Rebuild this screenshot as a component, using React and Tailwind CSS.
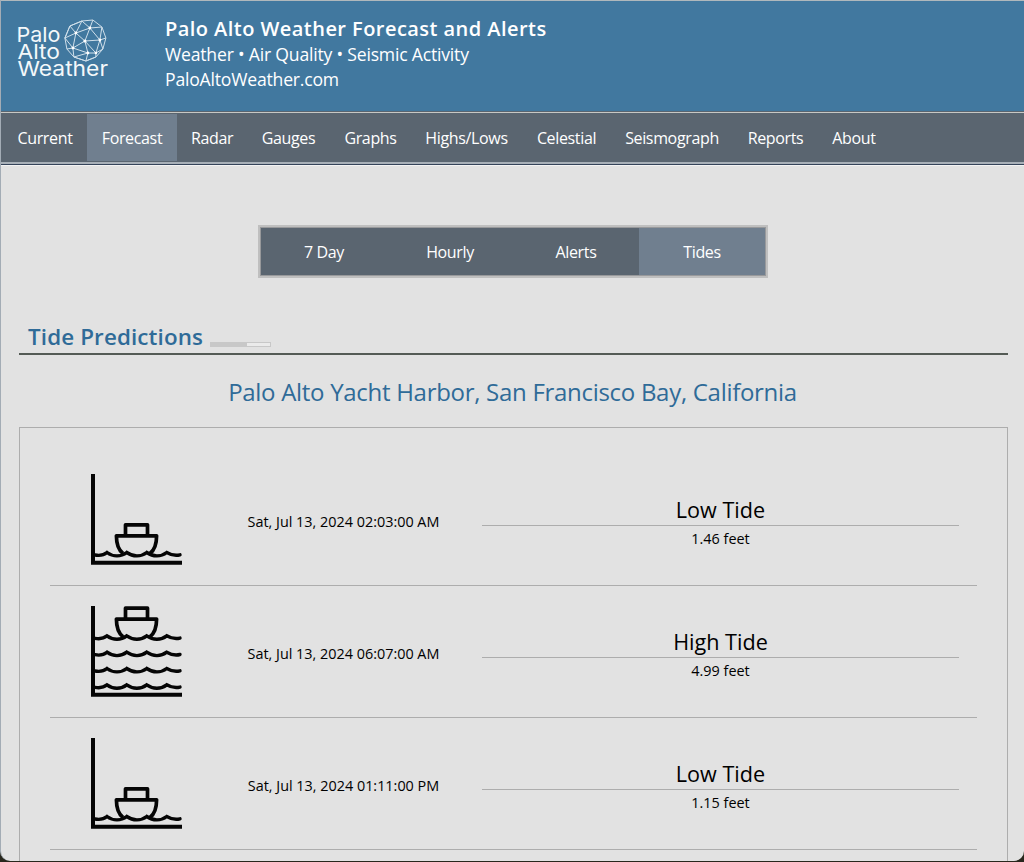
import React from 'react';

const NAV = [
  { label: 'Current', w: 'w-[84px]' },
  { label: 'Forecast', w: 'w-[90px]', active: true },
  { label: 'Radar', w: 'w-[70px]' },
  { label: 'Gauges', w: 'w-[83px]' },
  { label: 'Graphs', w: 'w-[81px]' },
  { label: 'Highs/Lows', w: 'w-[111px]' },
  { label: 'Celestial', w: 'w-[89px]' },
  { label: 'Seismograph', w: 'w-[122px]' },
  { label: 'Reports', w: 'w-[85px]' },
  { label: 'About', w: 'w-[72px]' },
];

const TABS = ['7 Day', 'Hourly', 'Alerts', 'Tides'];

const TIDES = [
  { date: 'Sat, Jul 13, 2024 02:03:00 AM', type: 'Low', feet: '1.46' },
  { date: 'Sat, Jul 13, 2024 06:07:00 AM', type: 'High', feet: '4.99' },
  { date: 'Sat, Jul 13, 2024 01:11:00 PM', type: 'Low', feet: '1.15' },
];

function Logo() {
  return (
    <svg width="96" height="66" viewBox="0 0 96 66" fill="none" className="shrink-0">
      <g fill="#f4f8fa" fontFamily="Inter, 'Open Sans', sans-serif" fontSize="20.500" fontWeight="400">
        <text x="2.500" y="27.200" textLength="44" lengthAdjust="spacingAndGlyphs">Palo</text>
        <text x="3.500" y="43.800" textLength="42.500" lengthAdjust="spacingAndGlyphs">Alto</text>
        <text x="3.500" y="60.800" textLength="90.500" lengthAdjust="spacingAndGlyphs">Weather</text>
      </g>
      <g transform="translate(0.900 1)">
        <g stroke="#cfdfea" strokeWidth="1" strokeLinejoin="round">
          <path d="M67 5 78 4 87 11 91 22 88 33 81 41 71 45 59 41 52 33 50 22 55 10Z" />
          <path d="M67 5 55 10 61 17 67 5 75 12 78 4M75 12 87 11 85 24 75 12 61 17 50 22 58 32 61 17 70 25 75 12M70 25 85 24 91 22M85 24 88 33 81 37 85 24M70 25 81 37 73 37 70 25 58 32 73 37 71 45 59 41 73 37M58 32 52 33M58 32 59 41M81 37 81 41 71 45M55 10 50 22" />
        </g>
        <g fill="#fff">
          <circle cx="61" cy="17" r="1.400" /><circle cx="75" cy="12" r="1.400" /><circle cx="70" cy="25" r="1.600" />
          <circle cx="85" cy="24" r="1.400" /><circle cx="58" cy="32" r="1.400" /><circle cx="73" cy="37" r="1.400" /><circle cx="81" cy="37" r="1.300" />
        </g>
      </g>
    </svg>
  );
}

const wave = (y) =>
  `M4 ${y}C9 ${y + 1} 13 ${y} 16 ${y - 2.5}C22 ${y + 2} 30 ${y + 2} 35.700 ${y - 2.5}C42 ${y + 2} 50 ${y + 2} 55.700 ${y - 2.5}C62 ${y + 2} 70 ${y + 2} 75.700 ${y - 2.5}C80 ${y} 84 ${y + 1} 89 ${y - 0.2}`;

function TideIcon({ high }) {
  return (
    <svg width="91" height="91" viewBox="0 0 91 91" fill="none" stroke="#050505" strokeWidth="3.700" className="overflow-visible">
      <path d="M2 0V88.800H91" strokeWidth="4" />
      <g transform={high ? 'translate(0 -48.700)' : undefined}>
        <path d="M34.500 61V50.800H56.500V61" strokeLinejoin="round" />
        <path d="M32 79.500C27.500 76 25.400 70 25.400 61.800H65.600C65.600 70 63.500 76 59 79.500" strokeLinejoin="round" />
      </g>
      {(high ? [32.3, 48.7, 65, 81.3] : [81]).map((y) => (
        <path key={y} d={wave(y)} strokeWidth="3.400" strokeLinecap="round" />
      ))}
    </svg>
  );
}

export default function App() {
  return (
    <div className="h-[862px] w-[1024px] overflow-hidden bg-[#28271d] font-['Open_Sans',sans-serif]">
      <div className="flex h-[861px] flex-col overflow-hidden rounded-b-[10px] border-l border-[#a3acb5] bg-[#e2e2e2]">
        <header className="flex h-[111px] shrink-0 border-t border-[#b0b8bc] bg-[#41789f] pl-[13px] pt-[14px] text-white">
          <Logo />
          <div className="ml-[55px] text-[17.6px] leading-[25px] tracking-[-0.2px]">
            <h1 className="pt-px text-[20px] font-semibold leading-[26px] tracking-[0.45px]">Palo Alto Weather Forecast and Alerts</h1>
            <p>Weather • Air Quality • Seismic Activity</p>
            <p>PaloAltoWeather.com</p>
          </div>
        </header>

        <nav className="flex h-[55px] shrink-0 flex-col border-t border-[#5a6570]">
          <div className="flex h-[51px] border-y border-t-[#c8c8c4] border-b-[#a8b0b8] bg-[#5a6570] pb-px pl-[2px] pt-px text-[16px] tracking-[-0.35px] text-white">
            {NAV.map((n) => (
              <a key={n.label} className={`flex h-[47px] items-center justify-center ${n.w} ${n.active ? 'bg-[#707f8f]' : ''}`}>
                {n.label}
              </a>
            ))}
          </div>
          <div className="h-px bg-[#a8b0b8]" />
          <div className="h-px bg-[#35445a]" />
          <div className="h-px bg-[#f3f3f3]" />
        </nav>

        <main className="flex flex-col">
          <div className="ml-[257px] mt-[59px] flex h-[53px] w-[510px] border-2 border-[#bfbfbf] bg-[#5a6570] text-[16px] tracking-[-0.35px] text-white">
            <div className="flex flex-1 border border-[#98999b]">
              {TABS.map((t) => (
                <a key={t} className={`flex flex-1 items-center justify-center ${t === 'Tides' ? 'bg-[#707f8f]' : ''}`}>
                  {t}
                </a>
              ))}
            </div>
          </div>

          <div className="ml-[18px] mt-[42px] flex h-[35px] w-[989px] items-end border-b-2 border-[#545b55] pb-[4px] pl-[9px]">
            <h2 className="text-[22.400px] font-semibold leading-[24px] tracking-[0.13px] text-[#2f6b98]">Tide Predictions</h2>
            <div className="mb-[2px] ml-[7px] flex h-[5px] w-[61px] border border-[#c8c8c8] bg-[#ebebeb]">
              <div className="w-[36px] bg-[#c8c8c8]" />
            </div>
          </div>

          <h3 className="ml-[17px] mt-[20px] w-[989px] text-center text-[24px] leading-[34px] tracking-[-0.29px] text-[#2f6b98]">
            Palo Alto Yacht Harbor, San Francisco Bay, California
          </h3>

          <section className="ml-[18px] mt-[18px] h-[460px] w-[989px] shrink-0 border border-[#adadad] px-[30px] pt-[26px]">
            {TIDES.map((t) => (
              <div key={t.date} className="flex h-[132px] items-start border-b border-[#adadad] pt-[20px] text-black">
                <div className="ml-[41px] w-[91px] shrink-0">
                  <TideIcon high={t.type === 'High'} />
                </div>
                <div className="ml-[64px] mt-[37px] w-[195px] whitespace-nowrap text-center text-[14.400px] leading-[22px]">{t.date}</div>
                <div className="ml-[41px] mt-[20px] w-[477px] text-center">
                  <div className="h-[32px] border-b border-[#adadad] text-[21.600px] leading-[32px]">{t.type} Tide</div>
                  <div className="text-[14.400px] leading-[26px]">{t.feet} feet</div>
                </div>
              </div>
            ))}
          </section>
        </main>
      </div>
    </div>
  );
}
